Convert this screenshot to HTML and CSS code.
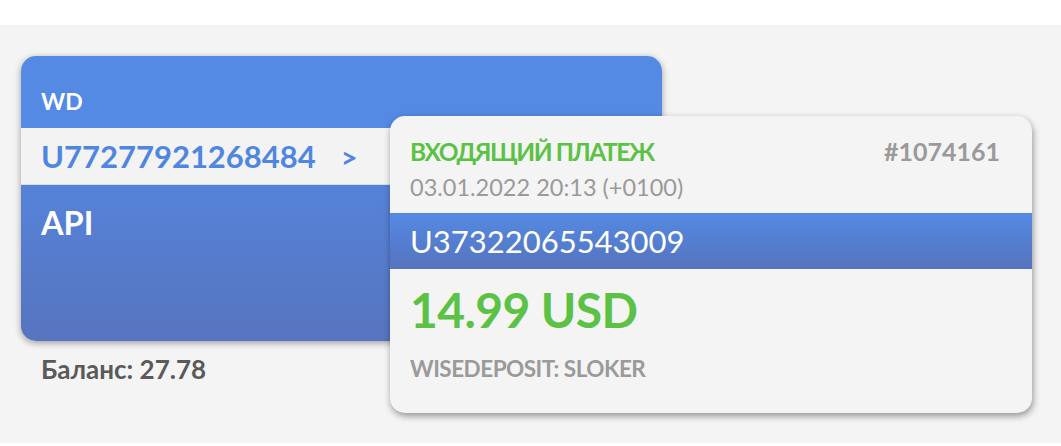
FILE: index.html
```html
<!DOCTYPE html>
<html lang="ru">
<head>
<meta charset="utf-8">
<title>Wallet</title>
<link rel="stylesheet" href="styles.css">
</head>
<body>
<div class="topbar"></div>
<main class="stage">
  <section class="wallet">
    <div class="card">
      <div class="card-head">WD</div>
      <div class="card-acc"><span class="acc-num">U77277921268484</span><span class="acc-arrow">&gt;</span></div>
      <div class="card-body">API</div>
    </div>
    <div class="balance">Баланс: 27.78</div>
  </section>
  <section class="notice">
    <div class="notice-top">
      <span class="notice-title">ВХОДЯЩИЙ ПЛАТЕЖ</span>
      <span class="notice-id">#1074161</span>
    </div>
    <div class="notice-date">03.01.2022 20:13 (+0100)</div>
    <div class="notice-band">U37322065543009</div>
    <div class="notice-amount">14.99 USD</div>
    <div class="notice-memo">WISEDEPOSIT: SLOKER</div>
  </section>
</main>
<div class="bottombar"></div>
</body>
</html>
```
FILE: styles.css
```css
* { box-sizing: border-box; }
html, body { margin: 0; padding: 0; }
body {
  background: #ffffff;
  font-family: Lato, "Noto Sans", "DejaVu Sans", sans-serif;
  width: 1061px;
  height: 446px;
  overflow: hidden;
}
.topbar { height: 25px; background: #ffffff; }
.stage {
  position: relative;
  height: 418px;
  background: #f4f4f4;
  padding: 31px 0 0 21px;
}
.bottombar { height: 3px; background: #ffffff; }

.wallet { width: 641px; }
.card {
  width: 641px;
  border-radius: 15px;
  overflow: hidden;
  box-shadow: 0 2px 7px rgba(0,0,0,0.36);
}
.card-head {
  height: 72px;
  background: #548ae4;
  color: #ffffff;
  font-weight: 700;
  font-size: 23px;
  line-height: 26px;
  padding: 32px 20px 0;
}
.card-acc {
  height: 57px;
  background: #f3f3f3;
  color: #4f86e1;
  font-weight: 700;
  font-size: 31px;
  display: flex;
  align-items: center;
  gap: 25px;
  padding: 0 20px;
  border-bottom: 1px solid #d7dcea;
}
.acc-arrow { font-size: 29px; }
.card-body {
  height: 156px;
  background: linear-gradient(#5583d8, #5774bf);
  color: #ffffff;
  font-weight: 700;
  font-size: 32.5px;
  line-height: 36px;
  padding: 20px 20px 0;
}
.balance {
  padding: 13px 20px 0;
  color: #5a5a5a;
  font-weight: 700;
  font-size: 26px;
  line-height: 30px;
}

.notice {
  position: absolute;
  left: 390px;
  top: 91px;
  width: 642px;
  height: 297px;
  background: #f4f4f4;
  border-radius: 15px;
  box-shadow: 1px 3px 7px rgba(0,0,0,0.4);
  padding-top: 20px;
}
.notice-top {
  display: flex;
  justify-content: space-between;
  align-items: baseline;
  padding: 0 32px 0 20px;
  font-weight: 700;
  line-height: 30px;
}
.notice-title {
  color: #5bc245;
  font-size: 24.5px;
  letter-spacing: -1.45px;
}
.notice-id {
  color: #9a9a9a;
  font-size: 25px;
}
.notice-date {
  padding: 6px 20px 0;
  color: #9a9a9a;
  font-size: 23.5px;
  line-height: 28px;
}
.notice-band {
  margin-top: 12px;
  height: 56px;
  background: linear-gradient(#548ae4, #5673bd);
  color: #ffffff;
  font-size: 31px;
  line-height: 56px;
  padding: 0 20px;
}
.notice-amount {
  color: #5bc245;
  font-weight: 700;
  font-size: 48px;
  letter-spacing: -0.6px;
  line-height: 60px;
  padding: 11px 20px 0;
}
.notice-memo {
  color: #9a9a9a;
  font-weight: 700;
  font-size: 22.5px;
  letter-spacing: -0.5px;
  line-height: 28px;
  padding: 15px 20px 0;
}
```
